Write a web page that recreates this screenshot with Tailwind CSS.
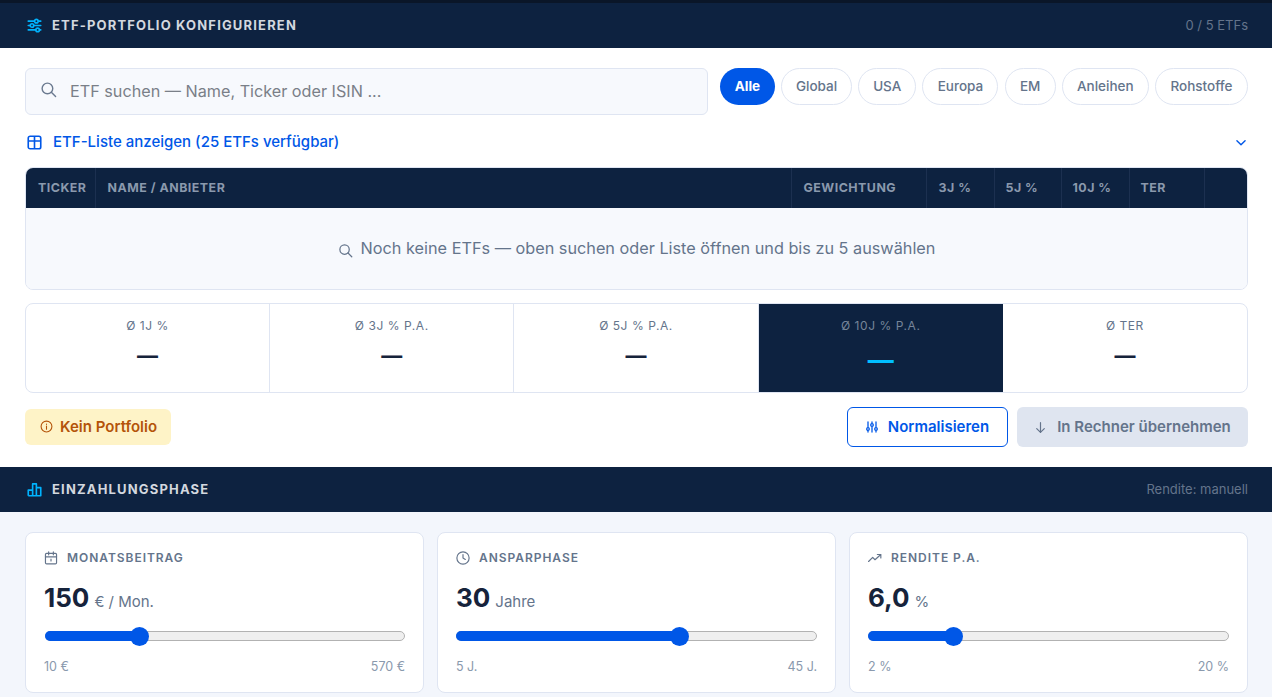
<!DOCTYPE html>
<html lang="de">
<head>
    <meta charset="utf-8">
    <title>ETF-Portfolio</title>
    <script src="https://cdn.jsdelivr.net/npm/@tailwindcss/browser@4"></script>
</head>
<body class="bg-white font-['Inter',sans-serif] border-t-[3px] border-[#0a1628] h-[697px] overflow-hidden">

<header class="bg-[#0d2240] h-[45px] pl-[25px] pr-[24px] flex items-center justify-between">
    <div class="flex items-center gap-[10px]">
        <svg class="ml-[2px] w-[15px] h-[15px] text-[#00b4ff]" viewBox="0 0 24 24" fill="none" stroke="currentColor" stroke-width="2.6" stroke-linecap="round"><path d="M2 5h20M2 12h20M2 19h20"/><circle cx="15" cy="5" r="2.8" fill="#0d2240"/><circle cx="8" cy="12" r="2.8" fill="#0d2240"/><circle cx="17" cy="19" r="2.8" fill="#0d2240"/></svg>
        <h2 class="text-[13px] font-bold tracking-[1.17px] text-[#d3d8df]">ETF-PORTFOLIO KONFIGURIEREN</h2>
    </div>
    <span class="text-[13px] text-[#64748b]">0 / 5 ETFs</span>
</header>

<section class="pl-[25px] pr-[24px] pt-[20px] pb-[20px]">
    <div class="flex items-start gap-[12px]">
        <div class="w-[683px] h-[47px] bg-[#f7f9fd] border border-[#dfe5f2] rounded-[6px] flex items-center pl-[14px]">
            <svg class="w-[17px] h-[17px] text-[#6b7a90] -mt-[4px]" viewBox="0 0 24 24" fill="none" stroke="currentColor" stroke-width="2" stroke-linecap="round"><circle cx="10.5" cy="10.5" r="7.5"/><path d="M16 16l6 6"/></svg>
            <span class="ml-[13px] text-[16.2px] text-[#7a7f88]">ETF suchen — Name, Ticker oder ISIN ...</span>
        </div>
        <div class="flex gap-[6.2px] text-[13.5px] font-medium text-[#64748b]">
            <span class="h-[37px] w-[55px] flex items-center justify-center rounded-full bg-[#0057e7] text-white font-bold">Alle</span>
            <span class="h-[37px] w-[71px] flex items-center justify-center rounded-full border border-[#dfe5f2]">Global</span>
            <span class="h-[37px] w-[58px] flex items-center justify-center rounded-full border border-[#dfe5f2]">USA</span>
            <span class="h-[37px] w-[76px] flex items-center justify-center rounded-full border border-[#dfe5f2]">Europa</span>
            <span class="h-[37px] w-[51px] flex items-center justify-center rounded-full border border-[#dfe5f2]">EM</span>
            <span class="h-[37px] w-[87px] flex items-center justify-center rounded-full border border-[#dfe5f2]">Anleihen</span>
            <span class="h-[37px] w-[93px] flex items-center justify-center rounded-full border border-[#dfe5f2]">Rohstoffe</span>
        </div>
    </div>

    <div class="mt-[16px] h-[23px] flex items-center justify-between text-[#0057e7]">
        <div class="flex items-center gap-[11px]">
            <svg class="ml-[2px] w-[15px] h-[15px]" viewBox="0 0 24 24" fill="none" stroke="currentColor" stroke-width="2.6" stroke-linejoin="round"><rect x="2" y="2" width="20" height="20" rx="3"/><path d="M2 9.5h20M12 2v20"/></svg>
            <span class="text-[15px] font-medium">ETF-Liste anzeigen (25 ETFs verfügbar)</span>
        </div>
        <svg class="-ml-[1px] w-[14px] h-[14px]" viewBox="0 0 24 24" fill="none" stroke="currentColor" stroke-width="2.4" stroke-linecap="round" stroke-linejoin="round"><path d="M5 8l7 7 7-7"/></svg>
    </div>

    <div class="mt-[13px] border border-[#dfe5f2] rounded-[8px] overflow-hidden">
        <table class="w-full table-fixed border-collapse">
            <thead class="bg-[#0d2240] text-[#8a99ad] text-[12.4px] font-bold tracking-[0.5px]">
                <tr class="h-[40px] text-left">
                    <th class="w-[69px] pl-[12px] border-r border-[#1c3050]">TICKER</th>
                    <th class="pl-[12px] border-r border-[#1c3050]">NAME / ANBIETER</th>
                    <th class="w-[135px] pl-[12px] border-r border-[#1c3050]">GEWICHTUNG</th>
                    <th class="w-[68px] pl-[12px] border-r border-[#1c3050]">3J %</th>
                    <th class="w-[67px] pl-[11px] border-r border-[#1c3050]">5J %</th>
                    <th class="w-[68px] pl-[11px] border-r border-[#1c3050]">10J %</th>
                    <th class="w-[75px] pl-[11px] border-r border-[#1c3050]">TER</th>
                    <th class="w-[43px]"></th>
                </tr>
            </thead>
        </table>
        <div class="h-[81px] bg-[#f7f9fd] flex items-center justify-center gap-[8px] text-[16.25px] text-[#64748b]">
            <svg class="w-[15px] h-[15px] mt-[3px]" viewBox="0 0 24 24" fill="none" stroke="currentColor" stroke-width="2" stroke-linecap="round"><circle cx="10.5" cy="10.5" r="7.5"/><path d="M16 16l6 6"/></svg>
            <span>Noch keine ETFs — oben suchen oder Liste öffnen und bis zu 5 auswählen</span>
        </div>
    </div>

    <div class="mt-[13px] h-[90px] border border-[#dfe5f2] rounded-[8px] overflow-hidden grid grid-cols-5">
        <div class="border-r border-[#dfe5f2] flex flex-col items-center pt-[13px]">
            <span class="text-[12px] tracking-[0.55px] text-[#64748b]">Ø 1J %</span>
            <span class="mt-[6px] text-[21px] leading-[30px] font-bold text-[#16233b]">—</span>
        </div>
        <div class="border-r border-[#dfe5f2] flex flex-col items-center pt-[13px]">
            <span class="text-[12px] tracking-[0.55px] text-[#64748b]">Ø 3J % P.A.</span>
            <span class="mt-[6px] text-[21px] leading-[30px] font-bold text-[#16233b]">—</span>
        </div>
        <div class="border-r border-[#dfe5f2] flex flex-col items-center pt-[13px]">
            <span class="text-[12px] tracking-[0.55px] text-[#64748b]">Ø 5J % P.A.</span>
            <span class="mt-[6px] text-[21px] leading-[30px] font-bold text-[#16233b]">—</span>
        </div>
        <div class="bg-[#0d2240] flex flex-col items-center pt-[13px]">
            <span class="text-[12px] tracking-[0.55px] text-[#76859a]">Ø 10J % P.A.</span>
            <span class="mt-[10px] text-[26px] leading-[30px] font-bold text-[#00bfff]">—</span>
        </div>
        <div class="flex flex-col items-center pt-[13px]">
            <span class="text-[12px] tracking-[0.55px] text-[#64748b]">Ø TER</span>
            <span class="mt-[6px] text-[21px] leading-[30px] font-bold text-[#16233b]">—</span>
        </div>
    </div>

    <div class="mt-[14px] flex items-start justify-between">
        <div class="mt-[2px] h-[36px] w-[146px] bg-[#fef3c7] rounded-[6px] flex items-center pl-[15px] gap-[7px] text-[#b45309]">
            <svg class="w-[13px] h-[13px] -mt-px" viewBox="0 0 24 24" fill="none" stroke="currentColor" stroke-width="2" stroke-linecap="round"><circle cx="12" cy="12" r="10"/><path d="M12 11v6M12 7.5v.5"/></svg>
            <span class="text-[15px] font-semibold">Kein Portfolio</span>
        </div>
        <div class="flex gap-[9px]">
            <button class="h-[40px] w-[161px] bg-white border border-[#0057e7] rounded-[6px] flex items-center justify-center gap-[10px] text-[#0057e7] text-[15px] font-semibold">
                <svg class="w-[12px] h-[12px]" viewBox="0 0 24 24" fill="none" stroke="currentColor" stroke-width="2.6" stroke-linecap="round"><path d="M4 2v10M4 20v2M12 2v2M12 12v10M20 2v10M20 20v2"/><circle cx="4" cy="16" r="2.6"/><circle cx="12" cy="8" r="2.6"/><circle cx="20" cy="16" r="2.6"/></svg>
                Normalisieren
            </button>
            <button class="h-[40px] w-[231px] bg-[#dfe5f0] rounded-[6px] flex items-center justify-center gap-[10px] text-[#64748b] text-[15px] font-semibold">
                <svg class="w-[13px] h-[13px]" viewBox="0 0 24 24" fill="none" stroke="currentColor" stroke-width="2.2" stroke-linecap="round" stroke-linejoin="round"><path d="M12 3v18M5 14l7 7 7-7"/></svg>
                In Rechner übernehmen
            </button>
        </div>
    </div>
</section>

<header class="bg-[#0d2240] h-[45px] pl-[25px] pr-[24px] flex items-center justify-between">
    <div class="flex items-center gap-[10px]">
        <svg class="ml-[2px] w-[15px] h-[15px] text-[#00b4ff]" viewBox="0 0 24 24" fill="none" stroke="currentColor" stroke-width="2.6" stroke-linejoin="round"><path d="M2 22V13h7v9M9 22V3h6v19M15 22V9h7v13zM2 22h20"/></svg>
        <h2 class="text-[13px] font-bold tracking-[1.17px] text-[#d3d8df]">EINZAHLUNGSPHASE</h2>
    </div>
    <span class="text-[13px] text-[#64748b]">Rendite: manuell</span>
</header>

<section class="bg-[#f3f6fc] pl-[25px] pr-[24px] pt-[20px] pb-[20px] grid grid-cols-3 gap-[13px]">
    <div class="h-[161px] bg-white border border-[#dfe5f2] rounded-[8px] px-[18px] pt-[16px]">
        <div class="flex items-center gap-[9px] text-[#64748b]">
            <svg class="w-[14px] h-[14px]" viewBox="0 0 24 24" fill="none" stroke="currentColor" stroke-width="2" stroke-linecap="round"><rect x="2.5" y="4" width="19" height="18" rx="2"/><path d="M2.5 10h19M8 1.5v5M16 1.5v5M12 14v3"/></svg>
            <span class="text-[12px] font-semibold tracking-[0.96px]">MONATSBEITRAG</span>
        </div>
        <div class="mt-[11px] flex items-baseline gap-[5px] h-[36px]">
            <span class="text-[26px] font-bold text-[#16233b]">150</span>
            <span class="text-[15px] text-[#64748b]">€ / Mon.</span>
        </div>
        <div class="relative ml-px mt-[17px] h-[10px] rounded-full bg-[#efefef] border border-[#b2b2b2]">
            <div class="absolute -left-px -top-px h-[10px] w-[95px] rounded-full bg-[#0057e7]"></div>
            <div class="absolute left-[83.5px] top-[-5.5px] w-[19px] h-[19px] rounded-full bg-[#0057e7]"></div>
        </div>
        <div class="mt-[17px] flex justify-between text-[12.5px] text-[#8a99ad]"><span>10 €</span><span>570 €</span></div>
    </div>

    <div class="h-[161px] bg-white border border-[#dfe5f2] rounded-[8px] px-[18px] pt-[16px]">
        <div class="flex items-center gap-[9px] text-[#64748b]">
            <svg class="w-[14px] h-[14px]" viewBox="0 0 24 24" fill="none" stroke="currentColor" stroke-width="2" stroke-linecap="round" stroke-linejoin="round"><circle cx="12" cy="12" r="10.5"/><path d="M12 6v6l4 2.5"/></svg>
            <span class="text-[12px] font-semibold tracking-[0.96px]">ANSPARPHASE</span>
        </div>
        <div class="mt-[11px] flex items-baseline gap-[5px] h-[36px]">
            <span class="text-[26px] font-bold text-[#16233b]">30</span>
            <span class="text-[15px] text-[#64748b]">Jahre</span>
        </div>
        <div class="relative mt-[17px] h-[10px] rounded-full bg-[#efefef] border border-[#b2b2b2]">
            <div class="absolute -left-px -top-px h-[10px] w-[224px] rounded-full bg-[#0057e7]"></div>
            <div class="absolute left-[212.5px] top-[-5.5px] w-[19px] h-[19px] rounded-full bg-[#0057e7]"></div>
        </div>
        <div class="mt-[17px] flex justify-between text-[12.5px] text-[#8a99ad]"><span>5 J.</span><span>45 J.</span></div>
    </div>

    <div class="h-[161px] bg-white border border-[#dfe5f2] rounded-[8px] px-[18px] pt-[16px]">
        <div class="flex items-center gap-[9px] text-[#64748b]">
            <svg class="w-[14px] h-[14px]" viewBox="0 0 24 24" fill="none" stroke="currentColor" stroke-width="2" stroke-linecap="round" stroke-linejoin="round"><path d="M1 18l7-7 4 4 10-9M16 6h6v6"/></svg>
            <span class="text-[12px] font-semibold tracking-[0.96px]">RENDITE P.A.</span>
        </div>
        <div class="mt-[11px] flex items-baseline gap-[5px] h-[36px]">
            <span class="text-[26px] font-bold text-[#16233b]">6,0</span>
            <span class="text-[15px] text-[#64748b]">%</span>
        </div>
        <div class="relative mt-[17px] h-[10px] rounded-full bg-[#efefef] border border-[#b2b2b2]">
            <div class="absolute -left-px -top-px h-[10px] w-[85px] rounded-full bg-[#0057e7]"></div>
            <div class="absolute left-[74.5px] top-[-5.5px] w-[19px] h-[19px] rounded-full bg-[#0057e7]"></div>
        </div>
        <div class="mt-[17px] flex justify-between text-[12.5px] text-[#8a99ad]"><span>2 %</span><span>20 %</span></div>
    </div>
</section>

</body>
</html>
